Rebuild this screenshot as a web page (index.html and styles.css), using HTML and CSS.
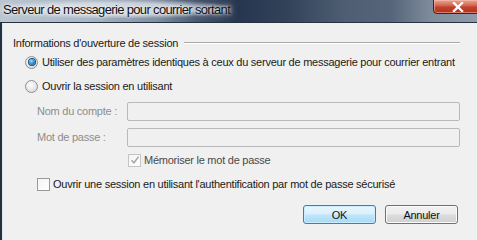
FILE: index.html
```html
<!DOCTYPE html>
<html lang="fr">
<head>
<meta charset="utf-8">
<title>Serveur de messagerie pour courrier sortant</title>
<link rel="stylesheet" href="styles.css">
</head>
<body>
<div class="window">
  <div class="titlebar">
    <span class="title">Serveur de messagerie pour courrier sortant</span>
    <div class="close"><svg width="14" height="10" viewBox="0 0 14 10"><path d="M3 1 L11 9 M11 1 L3 9" stroke="#fff" stroke-width="2.4" stroke-linecap="square"/></svg></div>
  </div>
  <div class="content">
    <div class="group-header"><span>Informations d'ouverture de session</span><div class="rule"></div></div>
    <label class="row radio-row r1"><span class="radio checked"><span class="dot"></span></span><span>Utiliser des paramètres identiques à ceux du serveur de messagerie pour courrier entrant</span></label>
    <label class="row radio-row r2"><span class="radio"></span><span>Ouvrir la session en utilisant</span></label>
    <div class="field f1"><span class="flabel">Nom du compte :</span><div class="input"></div></div>
    <div class="field f2"><span class="flabel">Mot de passe :</span><div class="input"></div></div>
    <label class="row check-row c1"><span class="check disabled"><svg width="10" height="10" viewBox="0 0 10 10"><path d="M1.5 5.2 L4 7.8 L8.6 1.6" fill="none" stroke="#a6a6a6" stroke-width="1.5"/></svg></span><span>Mémoriser le mot de passe</span></label>
    <label class="row check-row c2"><span class="check"></span><span>Ouvrir une session en utilisant l'authentification par mot de passe sécurisé</span></label>
    <div class="buttons">
      <button class="btn default">OK</button>
      <button class="btn">Annuler</button>
    </div>
  </div>
</div>
</body>
</html>
```
FILE: styles.css
```css
html, body {
  margin: 0;
  padding: 0;
  width: 477px;
  height: 240px;
  overflow: hidden;
  background: #f0f0f0;
}
.window {
  width: 477px;
  height: 240px;
  display: flex;
  flex-direction: column;
  font-family: "Liberation Sans", Arial, sans-serif;
  font-size: 11px;
  letter-spacing: -0.25px;
  color: #1a1a1a;
}
.titlebar {
  height: 22px;
  flex: none;
  display: flex;
  align-items: flex-start;
  position: relative;
  background: linear-gradient(90deg, #b9c5d0 0%, #aab7c4 18%, #7f8ea0 33%, #43546c 42%, #26364f 50%, #324259 60%, #4e5d71 72%, #56657a 82%, #7c8a9a 90%, #8f9ba8 100%);
  border-bottom: 1px solid #27323f;
}
.title {
  font-family: "Liberation Sans", Arial, sans-serif;
  font-size: 13px;
  letter-spacing: -0.65px;
  color: #111;
  padding: 2px 0 0 3px;
  line-height: 16px;
  background: radial-gradient(ellipse at center, rgba(225,231,237,0.7) 45%, rgba(225,231,237,0) 78%);
  text-shadow: 0 0 6px #fff, 0 0 3px rgba(255,255,255,0.8);
}
.close {
  position: absolute;
  top: -1px;
  right: -4px;
  width: 48px;
  height: 15px;
  border: 1px solid #4b1d17;
  border-radius: 0 0 4px 4px;
  background: linear-gradient(180deg, #e8a593 0%, #d36b55 40%, #c2412c 55%, #b3301f 100%);
  box-shadow: inset 0 0 0 1px rgba(255,200,190,0.5);
  display: flex;
  align-items: center;
  justify-content: center;
  padding-left: 2px;
  box-sizing: border-box;
}
.content {
  flex: 1;
  border-left: 2px solid #24303e;
  box-shadow: inset 1px 0 0 #dfe5ec;
  background: #f0f0f0;
  padding: 12px 0 0 11px;
  display: flex;
  flex-direction: column;
}
.group-header {
  display: flex;
  align-items: center;
  height: 16px;
  padding-right: 17px;
}
.group-header .rule {
  flex: 1;
  height: 0;
  border-top: 1px solid #a9a9a9;
  border-bottom: 1px solid #fff;
  margin-left: 6px;
}
.row {
  display: flex;
  align-items: center;
  height: 16px;
}
.radio-row { padding-left: 12px; }
.r1 { margin-top: 3px; }
.r2 { margin-top: 8px; }
.radio {
  width: 11px;
  height: 11px;
  border-radius: 50%;
  border: 1px solid #8e8f8f;
  background: radial-gradient(circle at 40% 35%, #ffffff 0%, #e4e4e4 60%, #cfcfcf 100%);
  margin-right: 4px;
  display: flex;
  align-items: center;
  justify-content: center;
  flex: none;
}
.dot {
  width: 6px;
  height: 6px;
  border-radius: 50%;
  background: radial-gradient(circle at 40% 35%, #9fe0ff 0%, #2d8fd0 50%, #0b4f8a 100%);
  box-shadow: 0 0 0 1px #1b4f7c;
}
.field {
  display: flex;
  align-items: center;
  height: 20px;
  padding-left: 24px;
  padding-right: 17px;
}
.f1 { margin-top: 7px; }
.f2 { margin-top: 6px; }
.flabel {
  width: 90px;
  flex: none;
  color: #8d8d8d;
}
.input {
  flex: 1;
  height: 17px;
  border: 1px solid #b9b9b9;
  border-radius: 2px;
  background: #f0f0f0;
}
.check-row { height: 16px; }
.c1 { margin-top: 5px; padding-left: 115px; color: #4a4a4a; }
.c2 { margin-top: 8px; padding-left: 24px; }
.check {
  width: 11px;
  height: 11px;
  border: 1px solid #9a9a9a;
  background: linear-gradient(135deg, #f4f4f4, #ffffff);
  margin-right: 3px;
  flex: none;
  display: flex;
  align-items: center;
  justify-content: center;
}
.check.disabled {
  border-color: #c4c4c4;
}
.buttons {
  display: flex;
  gap: 9px;
  margin-top: 13px;
  padding-left: 290px;
}
.btn {
  font-family: "Liberation Sans", Arial, sans-serif;
  font-size: 11px;
  letter-spacing: -0.25px;
  color: #111;
  width: 73px;
  height: 19px;
  padding: 0;
  border: 1px solid #707070;
  border-radius: 3px;
  background: linear-gradient(180deg, #f2f2f2 0%, #ebebeb 48%, #dddddd 52%, #cfcfcf 100%);
  box-shadow: inset 0 0 0 1px #fbfbfb;
}
.btn.default {
  border-color: #3c7fb1;
  background: linear-gradient(180deg, #eaf6fd 0%, #d9f0fc 48%, #bee6fd 52%, #a7d9f5 100%);
  box-shadow: inset 0 0 0 1px #c9ecff;
}
```
